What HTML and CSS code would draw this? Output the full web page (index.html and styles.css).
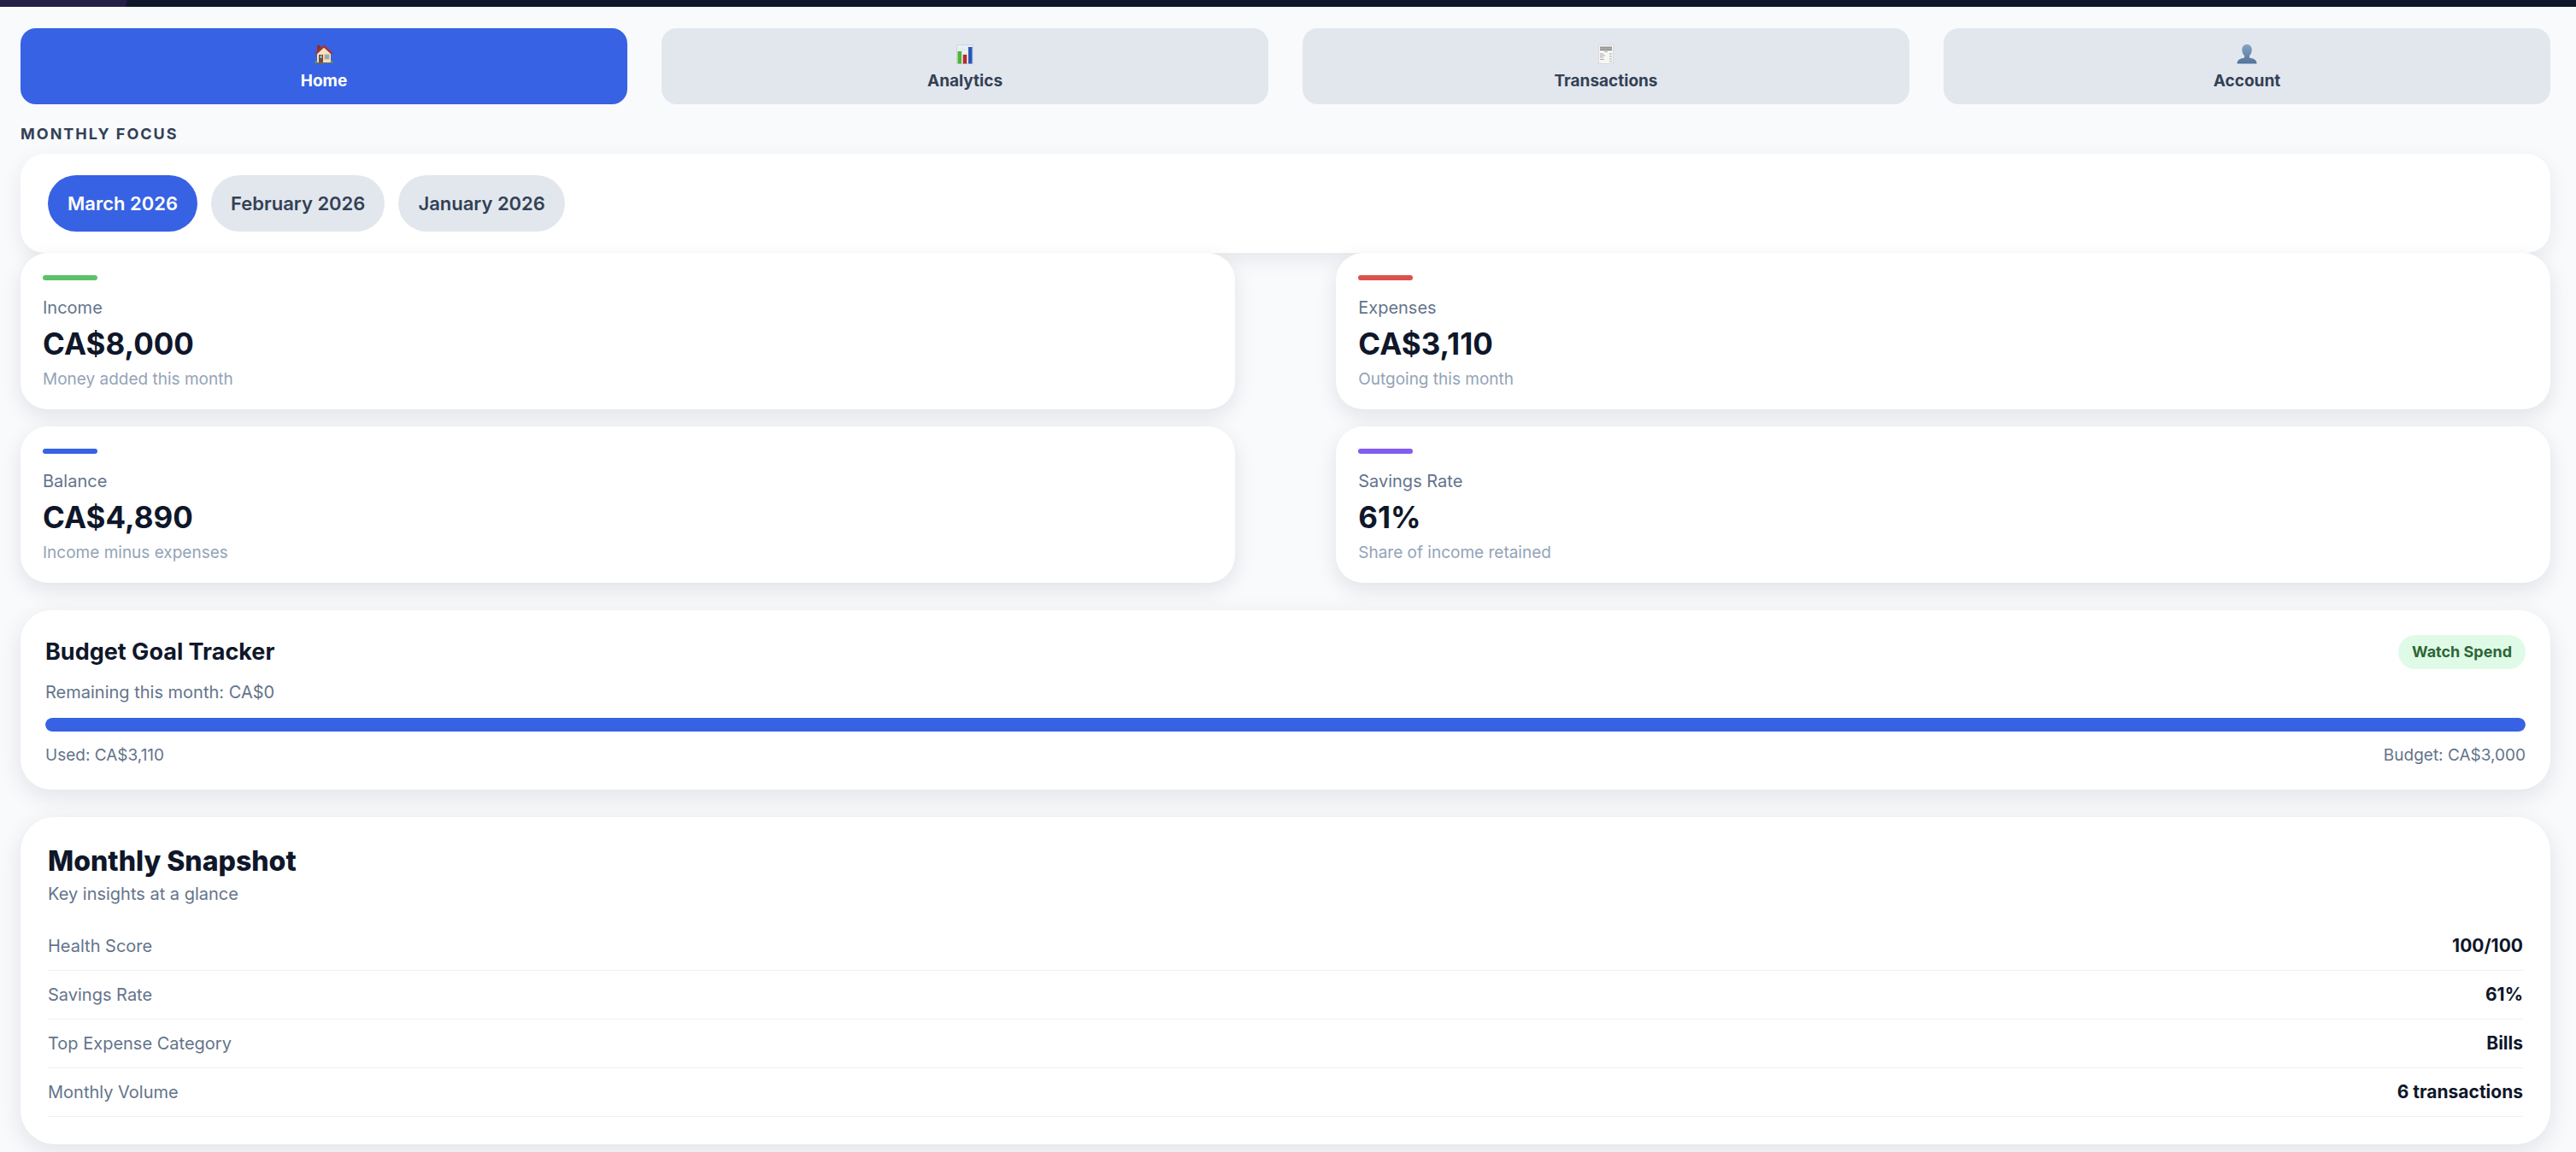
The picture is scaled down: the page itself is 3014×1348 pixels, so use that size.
FILE: index.html
```
<!DOCTYPE html>
<html lang="en">
<head>
    <meta charset="UTF-8">
    <meta name="viewport" content="width=device-width, initial-scale=1.0">
    <title>Budget Dashboard</title>
    <link rel="stylesheet" href="styles.css">
</head>
<body>
    <div class="top-strip"><div class="top-strip-accent"></div></div>

    <main class="page">
        <nav class="tabs">
            <button type="button" class="tab active">
                <svg class="tab-icon" viewBox="0 0 24 24" aria-hidden="true">
                    <rect x="4" y="2" width="4" height="7" fill="#8f2f2a"/>
                    <path d="M4 12 L12 4 L20 12 V22.500 H4 Z" fill="#f3e3bf"/>
                    <path d="M12 1.500 L22.500 11 L21 12.800 L12 4.800 L3 12.800 L1.500 11 Z" fill="#a5352e"/>
                    <rect x="6" y="13" width="5" height="9.500" fill="#7a4a32"/>
                    <rect x="7.500" y="14" width="2" height="3" fill="#9cc3dc"/>
                    <rect x="12.500" y="12.500" width="6" height="6" fill="#c9a878"/>
                    <rect x="13.500" y="13.500" width="4" height="4" fill="#78aee0"/>
                    <path d="M3.500 22.700 H20.500" stroke="#776655" stroke-width="1"/>
                    <circle cx="2.800" cy="21.500" r="1.500" fill="#5f9a3c"/>
                    <circle cx="21.200" cy="21.500" r="1.500" fill="#5f9a3c"/>
                </svg>
                <span>Home</span>
            </button>
            <button type="button" class="tab">
                <svg class="tab-icon" viewBox="0 0 24 24" aria-hidden="true">
                    <rect x="2.500" y="1.500" width="19" height="22" fill="#e9eff4" stroke="#ccd5dd"/>
                    <path d="M3 7 H21 M3 12.500 H21 M3 18 H21 M9 2 V23 M15 2 V23" stroke="#d5dee6" stroke-width="0.500"/>
                    <rect x="3.500" y="9" width="4.500" height="14.500" fill="#4fb535"/>
                    <rect x="9.700" y="13" width="4.500" height="10.500" fill="#b92a26"/>
                    <rect x="16" y="4" width="4.500" height="19.500" fill="#2a55b8"/>
                </svg>
                <span>Analytics</span>
            </button>
            <button type="button" class="tab">
                <svg class="tab-icon" viewBox="0 0 24 24" aria-hidden="true">
                    <rect x="3.500" y="1.500" width="17" height="22" fill="#f6f6f5" stroke="#d8d9da"/>
                    <rect x="5" y="3.500" width="14" height="3" fill="#999"/>
                    <path d="M5 7.500 H19" stroke="#666"/>
                    <path d="M10 9.500 H14 M5 12 H9 M5 14 H11 M5 16 H9 M5 18.500 H10 M16 12 H19 M16 15 H19 M16 18 H19 M16 21 H19" stroke="#999" stroke-width="0.800"/>
                </svg>
                <span>Transactions</span>
            </button>
            <button type="button" class="tab">
                <svg class="tab-icon" viewBox="0 0 24 24" aria-hidden="true">
                    <defs>
                        <linearGradient id="bust" x1="0" y1="0" x2="0" y2="1">
                            <stop offset="0" stop-color="#83a4c4"/>
                            <stop offset="1" stop-color="#53729b"/>
                        </linearGradient>
                    </defs>
                    <path d="M12 1 C8.500 1 6.300 3.500 6.300 7.200 C6.300 10 7.300 12.500 9 14 V16.500 C5 17.500 0.500 18.500 0.500 23.500 H23.500 C23.500 18.500 19 17.500 15 16.500 V14 C16.700 12.500 17.700 10 17.700 7.200 C17.700 3.500 15.500 1 12 1 Z" fill="url(#bust)"/>
                </svg>
                <span>Account</span>
            </button>
        </nav>

        <h2 class="section-label">Monthly Focus</h2>
        <div class="months">
            <button type="button" class="chip active">March 2026</button>
            <button type="button" class="chip">February 2026</button>
            <button type="button" class="chip">January 2026</button>
        </div>

        <section class="stats">
            <div class="stat">
                <div class="accent green"></div>
                <div class="stat-label">Income</div>
                <div class="stat-value">CA$8,000</div>
                <div class="stat-hint">Money added this month</div>
            </div>
            <div class="stat">
                <div class="accent red"></div>
                <div class="stat-label">Expenses</div>
                <div class="stat-value">CA$3,110</div>
                <div class="stat-hint">Outgoing this month</div>
            </div>
            <div class="stat">
                <div class="accent blue"></div>
                <div class="stat-label">Balance</div>
                <div class="stat-value">CA$4,890</div>
                <div class="stat-hint">Income minus expenses</div>
            </div>
            <div class="stat">
                <div class="accent purple"></div>
                <div class="stat-label">Savings Rate</div>
                <div class="stat-value">61%</div>
                <div class="stat-hint">Share of income retained</div>
            </div>
        </section>

        <section class="budget">
            <div class="budget-header">
                <h2 class="budget-title">Budget Goal Tracker</h2>
                <span class="badge">Watch Spend</span>
            </div>
            <p class="budget-text">Remaining this month: CA$0</p>
            <div class="progress"><div class="progress-fill" style="width: 100%"></div></div>
            <div class="budget-footer">
                <span>Used: CA$3,110</span>
                <span>Budget: CA$3,000</span>
            </div>
        </section>

        <section class="snapshot">
            <h2 class="snapshot-title">Monthly Snapshot</h2>
            <p class="snapshot-text">Key insights at a glance</p>
            <table class="insights">
                <tr><th scope="row">Health Score</th><td>100/100</td></tr>
                <tr><th scope="row">Savings Rate</th><td>61%</td></tr>
                <tr><th scope="row">Top Expense Category</th><td>Bills</td></tr>
                <tr><th scope="row">Monthly Volume</th><td>6 transactions</td></tr>
            </table>
        </section>
    </main>
</body>
</html>
```
FILE: styles.css
```
* {
    box-sizing: border-box;
}
body {
    font-family: Inter, "Liberation Sans", sans-serif;
    font-size: 20px;
    line-height: 28px;
    margin: 0;
    color: #0f172a;
    background-color: #f8fafc;
}
h2,
p {
    margin: 0;
}
button {
    font-family: inherit;
    border: none;
    cursor: pointer;
    color: #334155;
    background-color: #e2e7ee;
}
button.active {
    color: #fff;
    background-color: #3762e3;
}

/* Bottom edge of the page header */
.top-strip {
    height: 8px;
    background-color: #0f172a;
}
.top-strip-accent {
    width: 149px;
    height: 8px;
    background-color: #231f47;
    clip-path: polygon(0 0, 100% 0, 147px 100%, 0 100%);
}
.page {
    padding: 25px 30px 9px 24px;
}

/* Tabs */
.tabs {
    display: grid;
    grid-template-columns: repeat(4, 1fr);
    gap: 40px;
}
.tab {
    display: flex;
    flex-direction: column;
    align-items: center;
    gap: 8px;
    padding: 18px 8px 15px;
    border-radius: 18px;
    font-size: 19px;
    font-weight: 700;
    line-height: 24px;
}
.tab-icon {
    width: 24px;
    height: 24px;
}

/* Month picker */
.section-label {
    margin: 23px 0 11px;
    font-size: 18px;
    font-weight: 700;
    line-height: 24px;
    letter-spacing: 2px;
    text-transform: uppercase;
    color: #334155;
}
.months {
    display: flex;
    gap: 16px;
    padding: 25px 32px;
    border-radius: 28px;
    background-color: #fff;
    box-shadow: 0 8px 24px rgba(15, 23, 42, 0.08);
}
.chip {
    height: 66px;
    padding: 0 23px;
    border-radius: 33px;
    font-size: 22px;
    font-weight: 600;
}

/* Stat cards */
.stats {
    display: grid;
    grid-template-columns: 48% 48%;
    justify-content: space-between;
    row-gap: 20px;
}
.stat {
    padding: 26px 26px 23px;
    border-radius: 32px;
    background-color: #fff;
    box-shadow: 0 8px 24px rgba(15, 23, 42, 0.1);
}
.accent {
    width: 64px;
    height: 6px;
    border-radius: 3px;
    margin-bottom: 18px;
}
.green {
    background-color: #5bc268;
}
.red {
    background-color: #dc514c;
}
.blue {
    background-color: #3762e3;
}
.purple {
    background-color: #835df0;
}
.stat-label {
    color: #64748b;
}
.stat-value {
    margin: 6px 0 8px;
    font-size: 35px;
    font-weight: 700;
    line-height: 44px;
}
.stat-hint {
    font-size: 19px;
    line-height: 24px;
    color: #94a3b8;
}

/* Budget goal */
.budget,
.snapshot {
    margin-top: 32px;
    background-color: #fff;
    box-shadow: 0 8px 28px rgba(15, 23, 42, 0.1);
}
.budget {
    padding: 29px 29px 28px;
    border-radius: 36px;
}
.budget-header {
    display: flex;
    justify-content: space-between;
    align-items: center;
}
.budget-title {
    font-size: 27px;
    font-weight: 700;
    line-height: 40px;
}
.badge {
    padding: 8px 16px;
    border-radius: 20px;
    font-size: 18px;
    font-weight: 700;
    line-height: 24px;
    color: #2d6637;
    background-color: #dffbe7;
}
.budget-text {
    margin: 13px 0 16px;
    color: #64748b;
}
.progress {
    height: 16px;
    border-radius: 8px;
    overflow: hidden;
    background-color: #e2e8f0;
}
.progress-fill {
    height: 16px;
    border-radius: 8px;
    background-color: #3762e3;
}
.budget-footer {
    display: flex;
    justify-content: space-between;
    margin-top: 16px;
    font-size: 19px;
    line-height: 24px;
    color: #64748b;
}

/* Snapshot */
.snapshot {
    padding: 32px;
    border-radius: 40px;
}
.snapshot-title {
    font-size: 32px;
    font-weight: 800;
    line-height: 40px;
}
.snapshot-text {
    margin: 4px 0 19px;
    color: #64748b;
}
.insights {
    width: 100%;
    border-spacing: 0;
}
.insights th,
.insights td {
    padding: 14px 0;
    border-bottom: 1px solid #eef2f7;
}
.insights th {
    font-weight: 400;
    text-align: left;
    color: #64748b;
}
.insights td {
    font-size: 21px;
    font-weight: 700;
    text-align: right;
}
```
